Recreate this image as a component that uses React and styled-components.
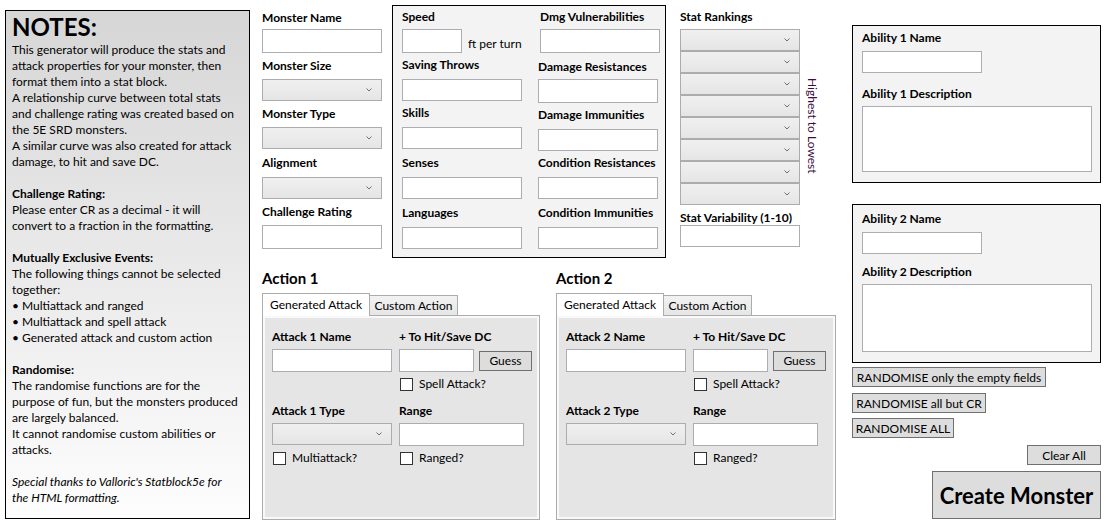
import React from "react";
import styled, { createGlobalStyle } from "styled-components";

const GlobalStyle = createGlobalStyle`
  html, body { margin: 0; padding: 0; background: #fff; }
  body {
    font-family: Lato, "Segoe UI", "Noto Sans", sans-serif;
    font-size: 12px;
    color: #000;
  }
  * { box-sizing: border-box; }
`;

const Page = styled.div`
  display: flex;
  align-items: flex-start;
  width: 1108px;
  height: 529px;
  overflow: hidden;
`;

/* ---------- notes panel ---------- */

const Notes = styled.div`
  margin: 10px 0 0 5px;
  width: 245px;
  height: 509px;
  flex-shrink: 0;
  border: 1px solid #000;
  background: linear-gradient(#d6d6d6, #fdfdfd);
  padding: 0 6px;
  line-height: 16px;
  white-space: nowrap;
`;

const NotesTitle = styled.div`
  font-size: 24px;
  font-weight: 700;
  line-height: 30px;
  margin-top: 1px;
`;

const Para = styled.p`
  margin: 0 0 16px;
  font-style: ${(p) => (p.$italic ? "italic" : "normal")};
`;

const Head = styled.b`
  font-weight: 700;
`;

/* ---------- form parts ---------- */

const Middle = styled.div`
  margin-left: 12px;
  display: flex;
  flex-direction: column;
  flex-shrink: 0;
`;

const TopRow = styled.div`
  display: flex;
  align-items: flex-start;
  margin-top: 5px;
`;

const BasicCol = styled.div`
  display: grid;
  grid-template-rows: 48px 48px 49px 49px auto;
  width: 120px;
  padding-top: 5px;
`;

const Field = styled.div`
  display: flex;
  flex-direction: column;
  align-items: flex-start;
  margin-top: ${(p) => p.$mt || 0}px;
  margin-left: ${(p) => p.$ml || 0}px;
`;

const Label = styled.div`
  font-weight: 700;
  line-height: 16px;
  white-space: nowrap;
  margin-bottom: ${(p) => (p.$gap === undefined ? 4 : p.$gap)}px;
`;

const TextBox = styled.div`
  width: ${(p) => p.$w || 120}px;
  height: ${(p) => p.$h || 22}px;
  border: 1px solid #abadb3;
  background: #fff;
  flex-shrink: 0;
`;

const SelectBox = styled.div`
  width: ${(p) => p.$w || 120}px;
  height: 22px;
  border: 1px solid #acacac;
  background: linear-gradient(#f0f0f0, #e5e5e5);
  display: flex;
  align-items: center;
  justify-content: flex-end;
  padding-right: 9px;
  flex-shrink: 0;
`;

const Chevron = () => (
  <svg width="6" height="4" viewBox="0 0 6 4">
    <polyline points="0.5,0.5 3,3 5.5,0.5" fill="none" stroke="#707070" strokeWidth="1" />
  </svg>
);

const Select = ({ w }) => (
  <SelectBox $w={w}>
    <Chevron />
  </SelectBox>
);

const DetailsBox = styled.div`
  margin-left: 10px;
  width: 274px;
  height: 253px;
  border: 1px solid #000;
  background: #f3f3f3;
  display: grid;
  grid-template-columns: 120px 120px;
  grid-template-rows: 48px 48px 50px 50px auto;
  column-gap: 16px;
  padding: 3px 0 0 9px;
`;

const InlineRow = styled.div`
  display: flex;
  align-items: center;
  gap: 6px;
`;

const Unit = styled.span`
  padding-top: 4px;
  white-space: nowrap;
`;

const StatCol = styled.div`
  margin-left: 14px;
  padding-top: 4px;
  display: flex;
  flex-direction: column;
`;

const RankRow = styled.div`
  display: flex;
  margin-top: 4px;
`;

const RankList = styled.div`
  display: flex;
  flex-direction: column;
  width: 120px;
`;

const VerticalNote = styled.div`
  writing-mode: vertical-rl;
  color: #3a0e40;
  line-height: 14px;
  padding-top: 49px;
  margin-left: 5px;
  white-space: nowrap;
`;

/* ---------- actions ---------- */

const BottomRow = styled.div`
  display: flex;
  gap: 16px;
  margin-top: 10px;
`;

const Action = styled.div`
  width: ${(p) => p.$w}px;
`;

const ActionTitle = styled.div`
  font-size: 15px;
  font-weight: 700;
  line-height: 20px;
`;

const TabBar = styled.div`
  display: flex;
  align-items: flex-end;
  height: 23px;
  margin-top: 5px;
  margin-bottom: -1px;
  position: relative;
  z-index: 1;
`;

const Tab = styled.div`
  width: ${(p) => p.$w}px;
  height: ${(p) => (p.$active ? 23 : 21)}px;
  margin-left: ${(p) => (p.$active ? 0 : -1)}px;
  border: 1px solid #acacac;
  border-bottom: ${(p) => (p.$active ? "none" : "1px solid #acacac")};
  background: ${(p) => (p.$active ? "#fff" : "linear-gradient(#f2f2f2, #e6e6e6)")};
  display: flex;
  align-items: center;
  justify-content: center;
  padding-bottom: ${(p) => (p.$active ? 2 : 0)}px;
  white-space: nowrap;
`;

const TabPanel = styled.div`
  height: 205px;
  border: 1px solid #acacac;
  background: #e5e5e5;
  box-shadow: inset 0 0 0 2px #f9f9f9;
  padding: 13px 0 0 9px;
  display: grid;
  grid-template-columns: 120px auto;
  grid-template-rows: 20px 28px 26px 20px 28px 14px;
  column-gap: 7px;
  align-items: start;
`;

const Check = styled.label`
  display: flex;
  align-items: center;
  gap: 6px;
  margin-left: 1px;
  line-height: 14px;
  white-space: nowrap;
`;

const Box = styled.span`
  width: 13px;
  height: 13px;
  border: 1px solid #333;
  background: #fff;
  flex-shrink: 0;
`;

const Button = styled.div`
  width: ${(p) => p.$w}px;
  height: ${(p) => p.$h || 20}px;
  margin-top: ${(p) => p.$mt || 0}px;
  margin-left: ${(p) => p.$ml || 0}px;
  align-self: ${(p) => (p.$right ? "flex-end" : "auto")};
  border: 1px solid #707070;
  background: #dddddd;
  display: flex;
  align-items: center;
  justify-content: center;
  font-size: ${(p) => p.$size || 12}px;
  font-weight: ${(p) => (p.$bold ? 700 : 400)};
  white-space: nowrap;
  flex-shrink: 0;
`;

const ActionBlock = ({ n, w, multi }) => (
  <Action $w={w}>
    <ActionTitle>Action {n}</ActionTitle>
    <TabBar>
      <Tab $active $w={108}>Generated Attack</Tab>
      <Tab $w={89}>Custom Action</Tab>
    </TabBar>
    <TabPanel>
      <Label>Attack {n} Name</Label>
      <Label>+ To Hit/Save DC</Label>
      <TextBox $h={23} />
      <InlineRow>
        <TextBox $w={75} $h={23} />
        <Button $w={53} $ml={-1}>Guess</Button>
      </InlineRow>
      <div />
      <Check>
        <Box />
        Spell Attack?
      </Check>
      <Label>Attack {n} Type</Label>
      <Label>Range</Label>
      <Select />
      <TextBox $w={125} $h={23} />
      {multi ? (
        <Check>
          <Box />
          Multiattack?
        </Check>
      ) : (
        <div />
      )}
      <Check>
        <Box />
        Ranged?
      </Check>
    </TabPanel>
  </Action>
);

/* ---------- right column ---------- */

const Right = styled.div`
  margin-left: 16px;
  margin-top: 25px;
  width: 249px;
  display: flex;
  flex-direction: column;
  align-items: flex-start;
  flex-shrink: 0;
`;

const AbilityBox = styled.div`
  width: 249px;
  height: ${(p) => p.$h}px;
  margin-top: ${(p) => p.$mt || 0}px;
  border: 1px solid #000;
  background: #f3f3f3;
  padding: ${(p) => p.$pt}px 0 0 9px;
  display: flex;
  flex-direction: column;
  align-items: flex-start;
`;

const Ability = ({ n, h, mt, pt, descGap, areaH }) => (
  <AbilityBox $h={h} $mt={mt} $pt={pt}>
    <Label $gap={5}>Ability {n} Name</Label>
    <TextBox />
    <Field $mt={descGap}>
      <Label $gap={4}>Ability {n} Description</Label>
      <TextBox $w={230} $h={areaH} />
    </Field>
  </AbilityBox>
);

export default function App() {
  return (
    <>
      <GlobalStyle />
      <Page>
        <Notes>
          <NotesTitle>NOTES:</NotesTitle>
          <Para>
            This generator will produce the stats and
            <br />
            attack properties for your monster, then
            <br />
            format them into a stat block.
            <br />
            A relationship curve between total stats
            <br />
            and challenge rating was created based on
            <br />
            the 5E SRD monsters.
            <br />
            A similar curve was also created for attack
            <br />
            damage, to hit and save DC.
          </Para>
          <Para>
            <Head>Challenge Rating:</Head>
            <br />
            Please enter CR as a decimal - it will
            <br />
            convert to a fraction in the formatting.
          </Para>
          <Para>
            <Head>Mutually Exclusive Events:</Head>
            <br />
            The following things cannot be selected
            <br />
            together:
            <br />
            • Multiattack and ranged
            <br />
            • Multiattack and spell attack
            <br />
            • Generated attack and custom action
          </Para>
          <Para>
            <Head>Randomise:</Head>
            <br />
            The randomise functions are for the
            <br />
            purpose of fun, but the monsters produced
            <br />
            are largely balanced.
            <br />
            It cannot randomise custom abilities or
            <br />
            attacks.
          </Para>
          <Para $italic>
            Special thanks to Valloric's Statblock5e for
            <br />
            the HTML formatting.
          </Para>
        </Notes>

        <Middle>
          <TopRow>
            <BasicCol>
              <Field>
                <Label $gap={3}>Monster Name</Label>
                <TextBox $h={24} />
              </Field>
              <Field>
                <Label $gap={5}>Monster Size</Label>
                <Select />
              </Field>
              <Field>
                <Label $gap={5}>Monster Type</Label>
                <Select />
              </Field>
              <Field>
                <Label $gap={6}>Alignment</Label>
                <Select />
              </Field>
              <Field>
                <Label $gap={5}>Challenge Rating</Label>
                <TextBox $h={24} />
              </Field>
            </BasicCol>

            <DetailsBox>
              <Field>
                <Label>Speed</Label>
                <InlineRow>
                  <TextBox $w={60} $h={24} />
                  <Unit>ft per turn</Unit>
                </InlineRow>
              </Field>
              <Field $ml={2}>
                <Label>Dmg Vulnerabilities</Label>
                <TextBox $h={24} />
              </Field>
              <Field>
                <Label $gap={6}>Saving Throws</Label>
                <TextBox />
              </Field>
              <Field $mt={2}>
                <Label>Damage Resistances</Label>
                <TextBox $h={24} />
              </Field>
              <Field>
                <Label $gap={6}>Skills</Label>
                <TextBox />
              </Field>
              <Field $mt={2}>
                <Label $gap={6}>Damage Immunities</Label>
                <TextBox />
              </Field>
              <Field>
                <Label $gap={6}>Senses</Label>
                <TextBox />
              </Field>
              <Field>
                <Label $gap={6}>Condition Resistances</Label>
                <TextBox />
              </Field>
              <Field>
                <Label $gap={6}>Languages</Label>
                <TextBox />
              </Field>
              <Field>
                <Label $gap={6}>Condition Immunities</Label>
                <TextBox />
              </Field>
            </DetailsBox>

            <StatCol>
              <Label $gap={0}>Stat Rankings</Label>
              <RankRow>
                <RankList>
                  {Array.from({ length: 8 }).map((_, i) => (
                    <Select key={i} />
                  ))}
                </RankList>
                <VerticalNote>Highest to Lowest</VerticalNote>
              </RankRow>
              <Field $mt={5}>
                <Label $gap={-1}>Stat Variability (1-10)</Label>
                <TextBox />
              </Field>
            </StatCol>
          </TopRow>

          <BottomRow>
            <ActionBlock n={1} w={278} multi />
            <ActionBlock n={2} w={280} />
          </BottomRow>
        </Middle>

        <Right>
          <Ability n={1} h={158} pt={4} descGap={13} areaH={66} />
          <Ability n={2} h={159} mt={21} pt={6} descGap={10} areaH={68} />
          <Button $w={194} $mt={4}>RANDOMISE only the empty fields</Button>
          <Button $w={134} $mt={6}>RANDOMISE all but CR</Button>
          <Button $w={102} $mt={5}>RANDOMISE ALL</Button>
          <Button $w={74} $mt={7} $right>Clear All</Button>
          <Button $w={169} $h={48} $mt={6} $right $bold $size={22}>
            Create Monster
          </Button>
        </Right>
      </Page>
    </>
  );
}
